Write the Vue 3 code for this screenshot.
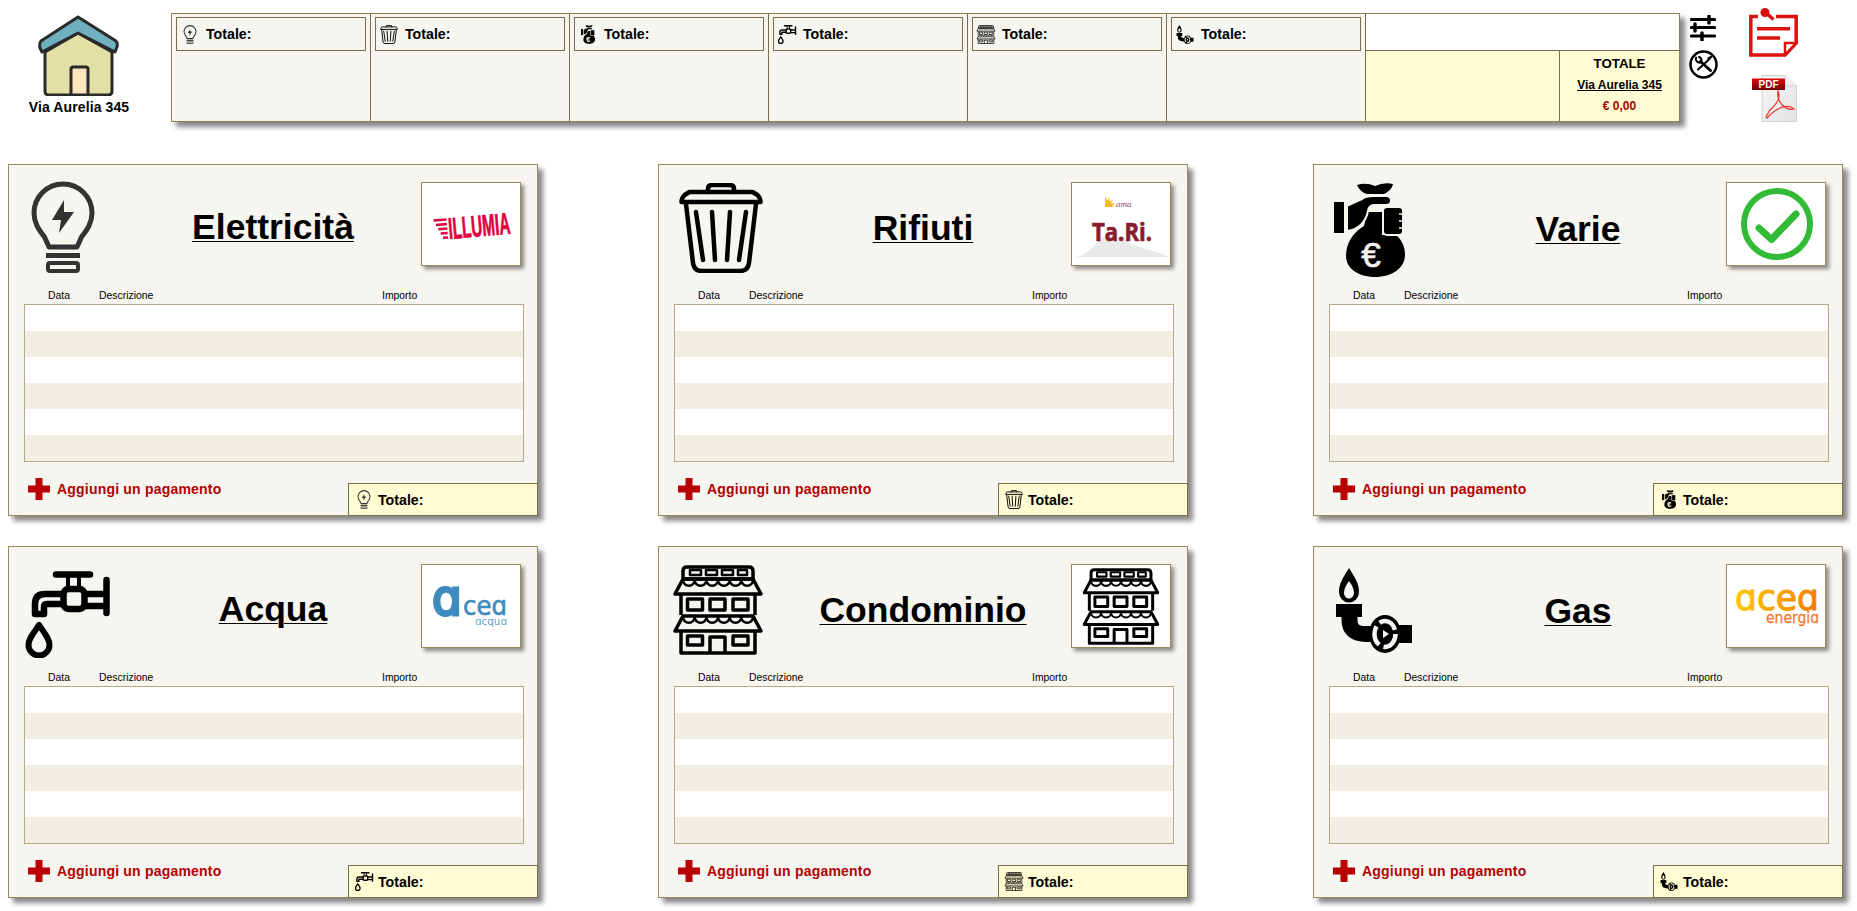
<template>
  <div class="page">
    <svg class="defs" aria-hidden="true">
      <defs>
        <linearGradient id="pdf-band" x1="0" y1="0" x2="0" y2="1">
          <stop offset="0" stop-color="#e20a0a" />
          <stop offset="1" stop-color="#6d0000" />
        </linearGradient>
        <linearGradient id="pdf-page" x1="0" y1="0" x2="1" y2="1">
          <stop offset="0" stop-color="#f7f7f7" />
          <stop offset="1" stop-color="#e2e2e2" />
        </linearGradient>
        <linearGradient id="acea-orange" x1="0" y1="0" x2="1" y2="0">
          <stop offset="0" stop-color="#ffc600" />
          <stop offset="0.55" stop-color="#f9a100" />
          <stop offset="1" stop-color="#f47a00" />
        </linearGradient>
      </defs>

      <symbol id="bulb" viewBox="0 0 64 92">
        <path d="M18 66 13.500 56C8 49 3 42 3 32 3 16 16 3 32 3s29 13 29 29c0 10-5 17-10.500 24L46 66Z" fill="none" stroke="#333" stroke-width="5" stroke-linejoin="round" />
        <path d="M33 19 21 39h9l-2 13 15-21H33Z" fill="#333" />
        <rect x="15" y="72" width="34" height="5" fill="#333" />
        <rect x="17" y="82" width="30" height="8" rx="2" fill="none" stroke="#333" stroke-width="4" />
      </symbol>

      <symbol id="trash" viewBox="0 0 84 90">
        <g fill="none" stroke="#000" stroke-width="4.500" stroke-linecap="round" stroke-linejoin="round">
          <path d="M29 9V6q0-4 4-4h18q4 0 4 4v3" />
          <path d="M2.500 19q0-4 3-7l5-3h63l5 3q3 3 3 7Z" />
          <path d="M7 21l7 59q1 8 9 8h38q8 0 9-8l7-59" />
          <path d="M17 29l7 48M33 29l3 48M51 29l-3 48M67 29l-7 48" />
        </g>
      </symbol>

      <symbol id="money" viewBox="0 0 71 96">
        <path d="M23 3q9-3 18 1 9-4 18-2-1 6-9 10H33q-7-2-10-9Z" />
        <rect x="0" y="20" width="10" height="31" />
        <path d="M12 74c0-12 6-23 18-30l3-14h15v23h14c6 5 9 12 9 20 0 13-13 22-30 22S12 86 12 74Z" />
        <path d="M13 24c7-4 11-5 15-7 3-3 8-3 12-3h12q5 0 5 4.500T52 23H40q-5 0-6 6c-2 11-10 19-21 20Z" :stroke="'var(--cut)'" stroke-width="2" />
        <rect x="49" y="25" width="20" height="28" rx="4" :stroke="'var(--cut)'" stroke-width="2" />
        <path d="M65 32h5M65 39h5M65 46h5" :stroke="'var(--cut)'" stroke-width="1.500" />
        <text x="37" y="85" text-anchor="middle" font-family="Liberation Sans" font-size="35" :fill="'var(--cut)'" :stroke="'var(--cut)'" stroke-width="0.700">€</text>
      </symbol>

      <symbol id="tap" viewBox="0 0 85 87">
        <g fill="none" stroke="#000" stroke-width="6.500" stroke-linecap="round" stroke-linejoin="round">
          <path d="M31 3.500h34" />
          <path d="M43 5v11M54 5v11" stroke-width="4" />
          <rect x="38.500" y="18" width="21" height="20" rx="5" />
          <path d="M60 23h21M60 35h21M81.500 9v33" />
          <path d="M38 23H20Q10 23 10 33V43H19V36Q19 33 22 33H38" />
          <path d="M14 54C8 63 3.500 68 3.500 74a10.500 10.500 0 0 0 21 0c0-6-4.500-11-10.500-20Z" stroke-width="6" />
        </g>
      </symbol>

      <symbol id="building" viewBox="0 0 90 90">
        <g fill="none" stroke="#000" stroke-width="3.500" stroke-linejoin="round">
          <path d="M10 14V6q0-4 4-4h62q4 0 4 4v8Z" />
          <path d="M17 5h11v5H17ZM33 5h11v5H33ZM49 5h11v5H49ZM65 5h9v5h-9Z" stroke-width="2.500" />
          <path d="M10 14 2 29H88L80 14Z" />
          <path d="M10 15a5.800 5.800 0 0 0 11.700 0 5.800 5.800 0 0 0 11.700 0 5.800 5.800 0 0 0 11.600 0 5.800 5.800 0 0 0 11.700 0 5.800 5.800 0 0 0 11.600 0 5.800 5.800 0 0 0 11.700 0" stroke-width="2.500" />
          <path d="M8 29V50M82 29V50" />
          <rect x="14.500" y="34" width="15" height="11" />
          <rect x="37" y="34" width="15" height="11" />
          <rect x="60" y="34" width="15" height="11" />
          <path d="M10 51 2 66H88L80 51Z" />
          <path d="M10 52a5.800 5.800 0 0 0 11.700 0 5.800 5.800 0 0 0 11.700 0 5.800 5.800 0 0 0 11.600 0 5.800 5.800 0 0 0 11.700 0 5.800 5.800 0 0 0 11.600 0 5.800 5.800 0 0 0 11.700 0" stroke-width="2.500" />
          <path d="M8 66V88H82V66" />
          <rect x="14.500" y="71" width="15" height="9" />
          <rect x="60" y="71" width="15" height="9" />
          <path d="M37 88V72H52V88" />
        </g>
      </symbol>

      <symbol id="gas" viewBox="0 0 76 85">
        <path fill-rule="evenodd" d="M13 0C7 10 3 15 3 24a10 10.500 0 0 0 20 0C23 15 19 10 13 0Zm0 13c3 4 5 8 5 12a5 5.500 0 0 1-10 0c0-4 2-8 5-12Z" />
        <rect x="0" y="36" width="26" height="13" />
        <path d="M13.500 47V52Q13.500 66 30 66H40" fill="none" stroke="#000" stroke-width="16" />
        <rect x="60" y="57" width="16" height="18" />
        <ellipse cx="49" cy="66" rx="16" ry="19" />
        <ellipse cx="49" cy="66" rx="10.500" ry="13" fill="none" :stroke="'var(--cut)'" stroke-width="4.500" stroke-dasharray="20 4.700" />
        <path d="M47 62 53 66 47 70Z" :fill="'var(--cut)'" />
      </symbol>
    </svg>

    <header class="top">
      <div class="home">
        <svg class="house" viewBox="0 0 81 81">
          <path d="M7 37 40 18 74 37V76q0 4-4 4H11q-4 0-4-4Z" fill="#e2e0a5" stroke="#2a2a2a" stroke-width="3" />
          <path d="M40 2 78 26q2 2 1 6l-2 5-37-19L4 37 2 33q-1-5 1-7Z" fill="#6fb0bf" stroke="#2a2a2a" stroke-width="3" stroke-linejoin="round" />
          <path d="M33 80V54q0-2 2-2h13q2 0 2 2v26Z" fill="#fde5bf" stroke="#2a2a2a" stroke-width="3" />
        </svg>
        <span class="home-name">Via Aurelia 345</span>
      </div>

      <section class="bar">
        <div v-for="c in cards" :key="c.title" class="bar-cell">
          <div class="mini-total">
            <span class="mini-icon"><svg><use :href="`#${c.icon}`" width="100%" height="100%" /></svg></span>
            <span>Totale:</span>
          </div>
        </div>
        <div class="summary">
          <div class="summary-blank"></div>
          <div class="summary-row">
            <div class="summary-fill"></div>
            <div class="summary-total">
              <strong>TOTALE</strong>
              <a>Via Aurelia 345</a>
              <b>€ 0,00</b>
            </div>
          </div>
        </div>
      </section>

      <div class="tools">
        <svg class="sliders" viewBox="0 0 26 26">
          <g stroke="#000" stroke-linecap="round">
            <path d="M1.500 4.500H24.500M1.500 12.500H24.500M1.500 21H24.500" stroke-width="3.200" />
            <path d="M19 1V8M5 9V16M12 18V25" stroke-width="3.500" />
          </g>
        </svg>
        <svg class="wrench" viewBox="0 0 29 29">
          <circle cx="14.500" cy="14.500" r="13" fill="none" stroke="#000" stroke-width="2.500" />
          <g fill="none" stroke="#000" stroke-linecap="round">
            <path d="M11.500 11.500 21.500 20.500" stroke-width="3" />
            <path d="M7 7.500a3.800 3.800 0 0 0 5 4.800" stroke-width="2" />
            <path d="M10 7a3.800 3.800 0 0 1 2.500 4" stroke-width="2" />
            <path d="M20.500 9 9 19.500" stroke-width="2" />
            <path d="M19.500 8.500 22 7" stroke-width="2.500" />
          </g>
        </svg>
      </div>

      <div class="docs">
        <svg class="note" viewBox="0 0 49 49">
          <g fill="none" stroke="#d9120c" stroke-width="3.500">
            <path d="M9 8.500H1.800V47H36L47.200 35V8.500H27" />
            <path d="M8 20.700H41M8 30H31" />
            <path d="M36 47V35H47L36 47" fill="#fff" stroke-width="2.500" />
            <path d="M16 4 24.500 11.500" />
          </g>
          <circle cx="16" cy="4.500" r="4.500" fill="#d9120c" />
        </svg>
        <svg class="pdf" viewBox="0 0 45 47">
          <path d="M10 .5H33L44.500 11V46.500H10Z" fill="url(#pdf-page)" stroke="#cfcfcf" />
          <path d="M33 .5V11H44.500" fill="#f2f2f2" stroke="#cfcfcf" />
          <rect x="0" y="3.500" width="33" height="11.500" fill="url(#pdf-band)" />
          <text x="16.500" y="13" text-anchor="middle" font-family="Liberation Sans" font-weight="700" font-size="10" fill="#fff">PDF</text>
          <path d="M26 16C24 26 33 36 42 34 36 28 24 33 16 42 12 46 15 37 21 32 25 28 29 22 26 16Z" fill="none" stroke="#e8342c" stroke-width="1.200" />
        </svg>
      </div>
    </header>

    <main class="cards">
      <article v-for="c in cards" :key="c.title" class="card">
        <div class="head">
          <svg class="big-icon" :class="`ic-${c.icon}`"><use :href="`#${c.icon}`" width="100%" height="100%" /></svg>
          <h2 class="title" :class="c.titleClass">{{ c.title }}</h2>
          <div class="logo">
            <svg v-if="c.logo === 'illumia'" viewBox="0 0 98 82">
              <g transform="rotate(-5 50 41)" fill="#e2003f" stroke="#e2003f">
                <path d="M12 33H25V35.500H12ZM14 37.500H25V40H14ZM16 42H25V44.500H16ZM18 46.500H25V49H18ZM20 51H25V53.500H20Z" stroke="none" />
                <text x="26" y="54" font-family="Liberation Sans" font-weight="700" font-size="30" stroke-width="0.700" textLength="62" lengthAdjust="spacingAndGlyphs">ILLUMIA</text>
              </g>
            </svg>
            <svg v-else-if="c.logo === 'tari'" viewBox="0 0 98 82">
              <path d="M2 74C18 73 22 60 30 54H52C60 66 76 64 97 74Z" fill="#e9e9ea" />
              <path d="M33 24V14l3 4 1-4 1 5 3-3-2 5 4-1-3 3 3 1Z" fill="#f4b81c" />
              <text x="44" y="24" font-family="Liberation Serif" font-style="italic" font-size="9" fill="#8a4a6a">ama</text>
              <text x="20" y="58" font-family="Open Sans" font-weight="700" font-size="25" fill="#8a1c2c" stroke="#8a1c2c" stroke-width="0.700" textLength="60" lengthAdjust="spacingAndGlyphs">Ta.Ri.</text>
            </svg>
            <svg v-else-if="c.logo === 'check'" viewBox="0 0 98 82">
              <circle cx="50" cy="41" r="33" fill="none" stroke="#32bb36" stroke-width="6" />
              <path d="M32 45 44.500 56.500 69 31" fill="none" stroke="#32bb36" stroke-width="7" stroke-linecap="round" stroke-linejoin="round" />
            </svg>
            <svg v-else-if="c.logo === 'acqua'" viewBox="0 0 98 82">
              <g font-family="DejaVu Sans" fill="#3f8bbd" stroke="#3f8bbd">
                <text x="10" y="50" font-size="49" stroke-width="3" textLength="30" lengthAdjust="spacingAndGlyphs">ɑ</text>
                <text x="41" y="50" font-size="26" stroke-width="0.600" textLength="44" lengthAdjust="spacingAndGlyphs">ceɑ</text>
                <text x="53" y="60" font-size="11" stroke="none" textLength="32" lengthAdjust="spacingAndGlyphs" fill="#5fa6cf">ɑcquɑ</text>
              </g>
            </svg>
            <svg v-else-if="c.logo === 'building'" viewBox="0 0 98 82">
              <use href="#building" x="10.500" y="2" width="77" height="79" />
            </svg>
            <svg v-else viewBox="0 0 98 82">
              <g font-family="DejaVu Sans">
                <text x="8" y="45" font-size="35" stroke="url(#acea-orange)" stroke-width="1" textLength="84" lengthAdjust="spacingAndGlyphs" fill="url(#acea-orange)">ɑceɑ</text>
                <text x="39" y="58" font-size="16" stroke="#ee7b32" stroke-width="0.300" textLength="53" lengthAdjust="spacingAndGlyphs" fill="#ee7b32">energiɑ</text>
              </g>
            </svg>
          </div>
        </div>

        <div class="cols">
          <span class="col-date">Data</span>
          <span class="col-desc">Descrizione</span>
          <span class="col-amount">Importo</span>
        </div>

        <div class="rows">
          <div v-for="n in 6" :key="n" class="row"></div>
        </div>

        <footer class="foot">
          <a class="add">
            <svg viewBox="0 0 22 22"><path d="M7.500 0h7v7.500H22v7h-7.500V22h-7v-7.500H0v-7h7.500Z" fill="#b80000" /></svg>
            Aggiungi un pagamento
          </a>
          <div class="card-total">
            <span class="mini-icon"><svg><use :href="`#${c.icon}`" width="100%" height="100%" /></svg></span>
            <span>Totale:</span>
          </div>
        </footer>
      </article>
    </main>
  </div>
</template>

<script setup>
const cards = [
  { title: 'Elettricità', icon: 'bulb', logo: 'illumia', titleClass: '' },
  { title: 'Rifiuti', icon: 'trash', logo: 'tari', titleClass: 'title-mid' },
  { title: 'Varie', icon: 'money', logo: 'check', titleClass: 'title-low' },
  { title: 'Acqua', icon: 'tap', logo: 'acqua', titleClass: '' },
  { title: 'Condominio', icon: 'building', logo: 'building', titleClass: 'title-mid' },
  { title: 'Gas', icon: 'gas', logo: 'energia', titleClass: 'title-low' }
]
</script>

<style>
body {
  background: #fff;
}
</style>

<style scoped>
.page {
  --cut: #f6f5f0;
  width: 1857px;
  height: 911px;
  overflow: hidden;
  font-family: "Liberation Sans", Arial, sans-serif;
  color: #000;
}

.defs {
  position: absolute;
  width: 0;
  height: 0;
}

.top {
  display: flex;
  align-items: flex-start;
  height: 122px;
  padding-top: 8px;
  box-sizing: border-box;
}

.home {
  width: 158px;
  margin-right: 13px;
  display: flex;
  flex-direction: column;
  align-items: center;
  margin-top: 7px;
}

.house {
  width: 81px;
  height: 81px;
  margin-left: -1px;
}

.home-name {
  margin-top: 3px;
  font-size: 14px;
  line-height: 16px;
  font-weight: 700;
  letter-spacing: 0.1px;
}

.bar {
  width: 1509px;
  height: 109px;
  margin-top: 5px;
  box-sizing: border-box;
  display: grid;
  grid-template-columns: repeat(6, 199px) 1fr;
  background: var(--cut);
  border: 1px solid #8e7f55;
  box-shadow: 5px 5px 5px #888;
}

.bar-cell {
  border-right: 1px solid #7b6d4c;
  padding: 3px 4px 0;
}

.mini-total {
  height: 34px;
  box-sizing: border-box;
  display: flex;
  align-items: center;
  gap: 6px;
  padding-left: 3px;
  border: 1px solid #7b6d4c;
  font-size: 14.2px;
  font-weight: 700;
}

.mini-icon {
  width: 20px;
  height: 19px;
  flex-shrink: 0;
}

.mini-icon svg {
  display: block;
  width: 100%;
  height: 100%;
}

.summary {
  display: flex;
  flex-direction: column;
  background: #fff;
}

.summary-blank {
  height: 36px;
  border-bottom: 1px solid #7b6d4c;
}

.summary-row {
  flex: 1;
  display: flex;
  background: #fffbd3;
}

.summary-fill {
  flex: 1;
  border-right: 1px solid #7b6d4c;
}

.summary-total {
  width: 119px;
  padding-top: 2px;
  display: flex;
  flex-direction: column;
  align-items: center;
  line-height: 21.5px;
}

.summary-total strong {
  font-size: 13.3px;
}

.summary-total a {
  font-size: 12px;
  font-weight: 700;
  text-decoration: underline;
}

.summary-total b {
  font-size: 12px;
  color: #b00000;
}

.tools {
  width: 29px;
  margin-left: 9px;
  display: flex;
  flex-direction: column;
  padding-top: 7px;
}

.sliders {
  width: 26px;
  height: 26px;
  margin-left: 1px;
}

.wrench {
  width: 29px;
  height: 29px;
  margin-top: 9px;
}

.docs {
  width: 50px;
  margin-left: 31px;
  display: flex;
  flex-direction: column;
}

.note {
  width: 49px;
  height: 49px;
}

.pdf {
  width: 45px;
  height: 47px;
  margin: 18px 0 0 3px;
}

.cards {
  margin: 42px 0 0 8px;
  display: grid;
  grid-template-columns: 650px 655px 530px;
  row-gap: 30px;
}

.card {
  width: 530px;
  height: 352px;
  box-sizing: border-box;
  display: flex;
  flex-direction: column;
  background: var(--cut);
  border: 1px solid #978a5f;
  box-shadow: 5px 5px 5px #888;
}

.head {
  height: 123px;
  display: grid;
  grid-template-columns: 1fr auto 1fr;
  align-items: start;
}

.big-icon {
  display: block;
}

.ic-bulb { width: 64px; height: 92px; margin: 16px 0 0 22px; }
.ic-trash { width: 84px; height: 90px; margin: 18px 0 0 20px; }
.ic-money { width: 71px; height: 96px; margin: 17px 0 0 20px; }
.ic-tap { width: 85px; height: 87px; margin: 24px 0 0 16px; }
.ic-building { width: 90px; height: 90px; margin: 18px 0 0 14px; }
.ic-gas { width: 76px; height: 85px; margin: 21px 0 0 22px; }

.title {
  margin: 42px 0 0;
  font-size: 35.5px;
  line-height: 40px;
  font-weight: 700;
  text-decoration: underline;
  text-decoration-thickness: 1px;
  text-underline-offset: 2px;
}

.title-mid {
  margin-top: 43px;
}

.title-low {
  margin-top: 44px;
}

.logo {
  justify-self: end;
  width: 100px;
  height: 84px;
  margin: 17px 16px 0 0;
  box-sizing: border-box;
  background: #fff;
  border: 1px solid #978a5f;
  box-shadow: 3px 3px 4px #888;
}

.logo svg {
  display: block;
  width: 100%;
  height: 100%;
}

.cols {
  height: 16px;
  display: flex;
  font-size: 10.4px;
  line-height: 16px;
}

.col-date {
  margin-left: 39px;
  width: 51px;
}

.col-desc {
  width: 283px;
}

.rows {
  margin-left: 15px;
  width: 500px;
  box-sizing: border-box;
  border: 1px solid #b5a987;
}

.row {
  height: 26px;
  background: #fff;
}

.row:nth-child(even) {
  background: #f2eee3;
}

.foot {
  flex: 1;
  display: flex;
  justify-content: space-between;
  align-items: flex-end;
  margin: 0 -1px -1px 0;
}

.add {
  align-self: flex-start;
  margin: 16px 0 0 19px;
  display: flex;
  align-items: center;
  gap: 7px;
  color: #b30000;
  font-size: 14px;
  font-weight: 700;
  letter-spacing: 0.2px;
}

.add svg {
  width: 22px;
  height: 22px;
}

.card-total {
  --cut: #fffbd3;
  width: 190px;
  height: 33px;
  box-sizing: border-box;
  display: flex;
  align-items: center;
  gap: 4px;
  padding-left: 5px;
  background: #fffbd3;
  border: 1px solid #7b6d4c;
  font-size: 14.2px;
  font-weight: 700;
}
</style>
